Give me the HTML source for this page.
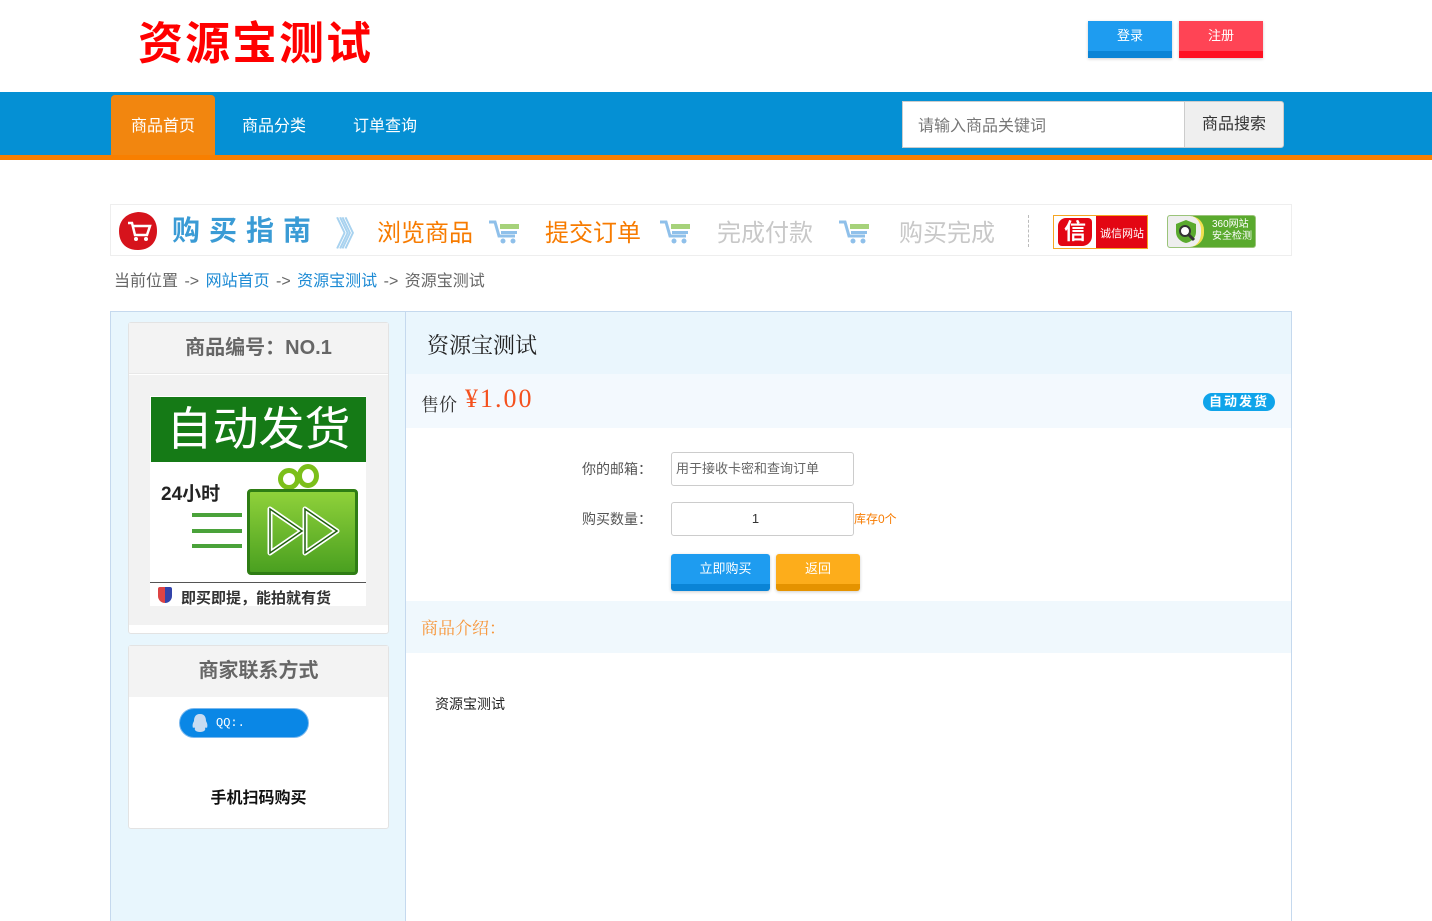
<!DOCTYPE html>
<html style="height:921px;overflow:hidden"><head><meta charset="utf-8"><style>
*{margin:0;padding:0;box-sizing:border-box}
body{width:1432px;height:921px;overflow:hidden;background:#fff;font-family:"Liberation Sans","Noto Sans CJK SC",sans-serif;position:relative}
.a{position:absolute}
.btn{position:absolute;color:#fff;font-size:13px;text-align:center;line-height:30px;box-shadow:0 1px 3px rgba(0,0,0,.2)}
.cart{position:absolute;width:34px;height:26px}
</style></head><body>
<div class="a" style="left:138px;top:15px;font-size:45px;font-weight:bold;color:#f00;letter-spacing:2px;line-height:58px">资源宝测试</div>
<div class="btn" style="left:1088px;top:21px;width:84px;height:37px;background:#1e9cf0;border-bottom:7px solid #0a84d6">登录</div>
<div class="btn" style="left:1179px;top:21px;width:84px;height:37px;background:#ff4455;border-bottom:7px solid #ff1122">注册</div>

<div class="a" style="left:0;top:92px;width:1432px;height:63px;background:#0590d4"></div>
<div class="a" style="left:0;top:155px;width:1432px;height:5px;background:#f87f00"></div>
<div class="a" style="left:111px;top:95px;width:104px;height:60px;background:#f2860f;border-radius:4px 4px 0 0"></div>
<div class="a" style="left:131px;top:112px;font-size:16px;color:#fff">商品首页</div>
<div class="a" style="left:242px;top:112px;font-size:16px;color:#fff">商品分类</div>
<div class="a" style="left:353px;top:112px;font-size:16px;color:#fff">订单查询</div>
<div class="a" style="left:902px;top:101px;width:283px;height:47px;background:#fff;border:1px solid #ccc"></div>
<div class="a" style="left:918px;top:112px;font-size:16px;color:#777">请输入商品关键词</div>
<div class="a" style="left:1184px;top:101px;width:100px;height:47px;background:#efefef;border:1px solid #ccc;border-radius:0 3px 3px 0;font-size:16px;color:#333;text-align:center;line-height:45px">商品搜索</div>

<div class="a" style="left:110px;top:204px;width:1182px;height:52px;border:1px solid #eee"></div>
<svg class="a" style="left:118px;top:211px" width="40" height="40" viewBox="0 0 40 40"><path d="M20 1 C32 1 39 8 39 20 C39 32 31 39 20 39 C8 39 1 32 1 20 C1 9 9 2 20 1Z" fill="#d6131c"/><path d="M10 12h4l3 12h12l3-9H15" fill="none" stroke="#fff" stroke-width="2.5"/><circle cx="18" cy="28" r="2" fill="#fff"/><circle cx="28" cy="28" r="2" fill="#fff"/></svg>
<div class="a" style="left:172px;top:209px;font-size:28px;font-weight:bold;color:#3a9bd5;letter-spacing:9px">购买指南</div>
<div class="a" style="left:335px;top:207px;font-size:34px;color:#a8d2ef;letter-spacing:-14px">》》</div>
<div class="a" style="left:377px;top:213px;font-size:24px;color:#f77b00">浏览商品</div>
<div class="a" style="left:545px;top:213px;font-size:24px;color:#f77b00">提交订单</div>
<div class="a" style="left:717px;top:213px;font-size:24px;color:#c8c8c8">完成付款</div>
<div class="a" style="left:899px;top:213px;font-size:24px;color:#c8c8c8">购买完成</div>
<svg class="cart" style="left:488px;top:219px" viewBox="0 0 34 26"><path d="M1 3h6l4 14h16" fill="none" stroke="#8fc0ea" stroke-width="3"/><rect x="12" y="5" width="19" height="5" fill="#a6d27a"/><rect x="13" y="12" width="16" height="3" fill="#8fc0ea"/><circle cx="15" cy="22" r="2.5" fill="#8fc0ea"/><circle cx="25" cy="22" r="2.5" fill="#8fc0ea"/></svg>
<svg class="cart" style="left:659px;top:219px" viewBox="0 0 34 26"><path d="M1 3h6l4 14h16" fill="none" stroke="#8fc0ea" stroke-width="3"/><rect x="12" y="5" width="19" height="5" fill="#a6d27a"/><rect x="13" y="12" width="16" height="3" fill="#8fc0ea"/><circle cx="15" cy="22" r="2.5" fill="#8fc0ea"/><circle cx="25" cy="22" r="2.5" fill="#8fc0ea"/></svg>
<svg class="cart" style="left:838px;top:219px" viewBox="0 0 34 26"><path d="M1 3h6l4 14h16" fill="none" stroke="#8fc0ea" stroke-width="3"/><rect x="12" y="5" width="19" height="5" fill="#a6d27a"/><rect x="13" y="12" width="16" height="3" fill="#8fc0ea"/><circle cx="15" cy="22" r="2.5" fill="#8fc0ea"/><circle cx="25" cy="22" r="2.5" fill="#8fc0ea"/></svg>
<div class="a" style="left:1028px;top:215px;width:1px;height:32px;border-left:1px dashed #bbb"></div>
<div class="a" style="left:1053px;top:215px;width:95px;height:34px;border:1px solid #f5a623;background:#e30613;overflow:hidden">
 <div class="a" style="left:0;top:0;width:42px;height:32px;background:#fff"></div>
 <div class="a" style="left:4px;top:2px;width:34px;height:28px;background:#e30613;border-radius:8px 4px 10px 4px;color:#fff;font-size:22px;font-weight:bold;line-height:28px;text-align:center">信</div>
 <div class="a" style="left:46px;top:9px;font-size:11px;color:#fff">诚信网站</div>
</div>
<div class="a" style="left:1167px;top:215px;width:89px;height:33px;border:1px solid #9bc47a;border-radius:3px;background:#5aaa2e;overflow:hidden">
 <div class="a" style="left:0;top:0;width:36px;height:31px;background:#eee;border-right:3px solid #f0e050;border-radius:0 14px 14px 0"></div>
 <svg class="a" style="left:6px;top:3px" width="24" height="25" viewBox="0 0 24 25"><path d="M12 1L22 5v8c0 6-5 10-10 11C7 23 2 19 2 13V5z" fill="#5aaa2e"/><circle cx="11" cy="12" r="5" fill="#fff" stroke="#333" stroke-width="2"/><path d="M15 16l5 5" stroke="#333" stroke-width="3"/></svg>
 <div class="a" style="left:44px;top:3px;font-size:10px;color:#fff;line-height:12px">360网站<br>安全检测</div>
</div>

<div class="a" style="left:114px;top:267px;font-size:16px;color:#666;word-spacing:2px">当前位置 -&gt; <span style="color:#1c8ad4">网站首页</span> -&gt; <span style="color:#1c8ad4">资源宝测试</span> -&gt; 资源宝测试</div>

<div class="a" style="left:110px;top:311px;width:1182px;height:610px;background:#e8f6fd;border:1px solid #c5d9ee;border-bottom:none"></div>
<div class="a" style="left:405px;top:312px;width:886px;height:609px;background:#fff;border-left:1px solid #c5d9ee"></div>
<div class="a" style="left:406px;top:312px;width:885px;height:62px;background:#eaf6fd"></div>
<div class="a" style="left:427px;top:329px;font-size:22px;color:#222;font-family:'Liberation Serif','Noto Serif CJK SC',serif">资源宝测试</div>
<div class="a" style="left:406px;top:374px;width:885px;height:54px;background:#f3f9fe"></div>
<div class="a" style="left:421px;top:391px;font-size:18px;color:#333;font-family:'Liberation Serif','Noto Serif CJK SC',serif">售价</div>
<div class="a" style="left:465px;top:384px;font-size:26px;color:#f4511e;letter-spacing:2px;font-family:'Liberation Serif','Noto Serif CJK SC',serif">¥1.00</div>
<div class="a" style="left:1203px;top:393px;width:72px;height:18px;background:#0fa4ea;border-radius:9px;color:#fff;font-size:13px;font-weight:bold;text-align:center;line-height:18px;letter-spacing:2px">自动发货</div>

<div class="a" style="left:582px;top:459px;font-size:14px;color:#555">你的邮箱：</div>
<div class="a" style="left:671px;top:452px;width:183px;height:34px;border:1px solid #ccc;border-radius:3px;font-size:13px;color:#666;line-height:32px;padding-left:4px">用于接收卡密和查询订单</div>
<div class="a" style="left:582px;top:509px;font-size:14px;color:#555">购买数量：</div>
<div class="a" style="left:671px;top:502px;width:183px;height:34px;border:1px solid #ccc;border-radius:3px;font-size:13px;color:#333;line-height:32px;text-align:center;padding-right:14px">1</div>
<div class="a" style="left:854px;top:510px;font-size:12px;color:#f77b00">库存0个</div>
<div class="btn" style="left:671px;top:554px;width:99px;height:37px;background:#1e9cf0;border-bottom:7px solid #0a84d6;border-radius:3px;padding-left:10px">立即购买</div>
<div class="btn" style="left:776px;top:554px;width:84px;height:37px;background:#fdad1b;border-bottom:7px solid #e59300;border-radius:3px">返回</div>

<div class="a" style="left:406px;top:601px;width:885px;height:52px;background:#f0f8fd"></div>
<div class="a" style="left:421px;top:614px;font-size:17px;color:#f7963a;font-family:'Liberation Serif','Noto Serif CJK SC',serif">商品介绍：</div>
<div class="a" style="left:435px;top:694px;font-size:14px;color:#222">资源宝测试</div>

<div class="a" style="left:128px;top:322px;width:261px;height:312px;background:#fff;border:1px solid #e3e3e3;border-radius:3px"></div>
<div class="a" style="left:129px;top:323px;width:259px;height:51px;background:#f3f3f3;border-bottom:1px solid #e8e8e8;font-size:20px;font-weight:bold;color:#666;text-align:center;line-height:51px">商品编号：NO.1</div>
<div class="a" style="left:129px;top:375px;width:259px;height:250px;background:#f2f2f2"></div>
<div class="a" style="left:150px;top:396px;width:216px;height:210px;background:#fff;overflow:hidden">
 <div class="a" style="left:1px;top:1px;width:215px;height:65px;background:#157a16;color:#fff;font-size:46px;text-align:center;line-height:64px">自动发货</div>
 <div class="a" style="left:11px;top:83px;font-size:19px;font-weight:bold;color:#222">24小时</div>
 <div class="a" style="left:42px;top:117px;width:50px;height:4px;background:#4aa23a"></div>
 <div class="a" style="left:42px;top:133px;width:50px;height:4px;background:#4aa23a"></div>
 <div class="a" style="left:42px;top:148px;width:50px;height:4px;background:#4aa23a"></div>
 <div class="a" style="left:128px;top:72px;width:22px;height:22px;border:5px solid #7bbf1a;border-radius:50%"></div>
 <div class="a" style="left:147px;top:68px;width:22px;height:24px;border:5px solid #7bbf1a;border-radius:50%"></div>
 <div class="a" style="left:97px;top:93px;width:111px;height:86px;background:linear-gradient(#8fd13a,#4aa020);border:3px solid #2e7d14;border-radius:4px"></div>
 <svg class="a" style="left:115px;top:110px" width="80" height="50" viewBox="0 0 80 50"><path d="M5 3L37 25L5 47Z M40 3L72 25L40 47Z" fill="none" stroke="#fff" stroke-width="5" stroke-linejoin="round"/><path d="M5 3L37 25L5 47Z M40 3L72 25L40 47Z" fill="none" stroke="#1f5d0c" stroke-width="1.5"/></svg>
 <div class="a" style="left:0;top:186px;width:216px;height:1px;background:#555"></div>
 <div class="a" style="left:8px;top:191px;width:14px;height:16px;background:linear-gradient(90deg,#d44 50%,#34a 50%);border-radius:2px 2px 7px 7px"></div>
 <div class="a" style="left:31px;top:191px;font-size:15px;font-weight:bold;color:#333">即买即提，能拍就有货</div>
</div>

<div class="a" style="left:128px;top:645px;width:261px;height:184px;background:#fff;border:1px solid #e3e3e3;border-radius:3px"></div>
<div class="a" style="left:129px;top:646px;width:259px;height:51px;background:#f3f3f3;font-size:20px;font-weight:bold;color:#666;text-align:center;line-height:51px">商家联系方式</div>
<div class="a" style="left:179px;top:708px;width:130px;height:30px;background:#0a87e6;border-radius:15px;border:1px solid #7ab8ee"></div>
<svg class="a" style="left:190px;top:713px" width="20" height="20" viewBox="0 0 20 20"><path d="M10 1C5 1 4 5 4 8C3 10 2 12 3 15C4 14 5 15 5 15C4 17 6 19 10 19C14 19 16 17 15 15C15 15 16 14 17 15C18 12 17 10 16 8C16 5 15 1 10 1Z" fill="#c8dcf2"/></svg>
<div class="a" style="left:216px;top:716px;font-size:12px;color:#fff;font-family:'Liberation Mono',monospace">QQ:.</div>
<div class="a" style="left:129px;top:784px;width:259px;text-align:center;font-size:16px;font-weight:bold;color:#111">手机扫码购买</div>
</body></html>
